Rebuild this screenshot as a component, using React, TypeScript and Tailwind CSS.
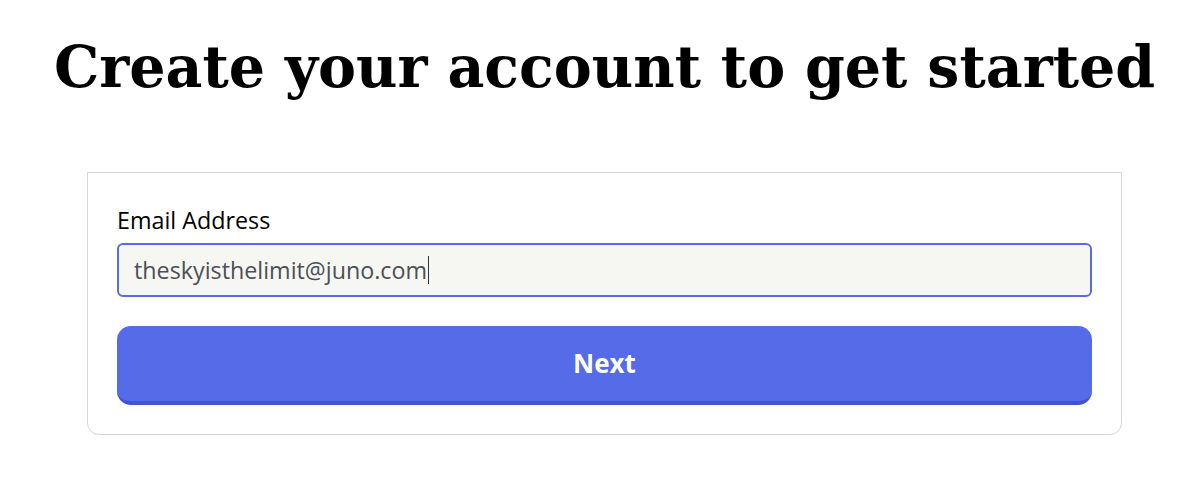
import React from 'react';

export default function App() {
  return (
    <div className="min-h-screen w-full bg-white">
      <div className="ml-[87px] flex w-[1035px] flex-col items-center pt-[31px]">
        <h1
          className="whitespace-nowrap text-center text-[57px] font-bold leading-[72px] text-black"
          style={{ fontFamily: '"DejaVu Serif", "Liberation Serif", serif' }}
        >
          Create your account to get started
        </h1>
        <div
          className="mt-[69px] w-full rounded-b-[12px] border border-[#d6d6d6] px-[29px] pb-[29px] pt-[33px]"
          style={{ fontFamily: '"Open Sans", Lato, sans-serif' }}
        >
          <label className="block text-[23.3px] leading-[28px] text-black">Email Address</label>
          <div className="mt-[9px] flex h-[54px] items-center rounded-[6px] border-2 border-[#5b6be6] bg-[#f6f7f3] px-[15px]">
            <span className="text-[23.3px] text-[#4b5057]">theskyisthelimit@juno.com</span>
            <span className="ml-[1px] h-[28px] w-[1px] bg-[#333]" />
          </div>
          <button className="mt-[29px] flex h-[79px] w-full items-center justify-center rounded-[14px] border-b-4 border-[#4254cf] bg-[#566be8] text-[26px] font-bold text-white">
            Next
          </button>
        </div>
      </div>
    </div>
  );
}
